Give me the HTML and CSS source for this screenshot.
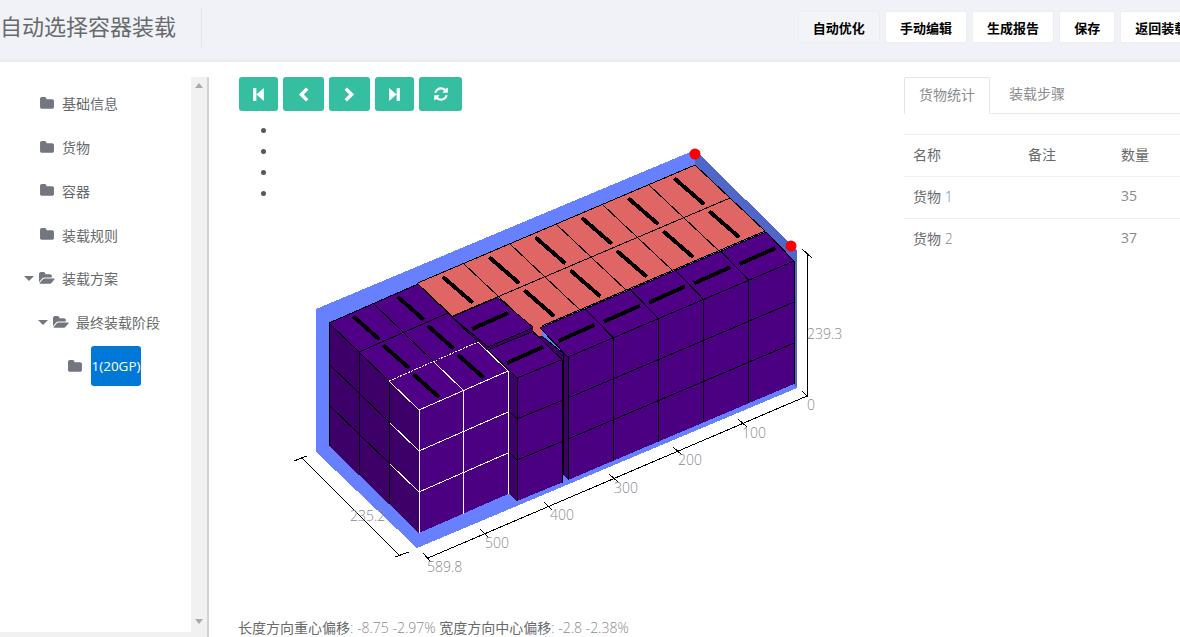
FILE: index.html
```html
<!DOCTYPE html>
<html lang="zh">

<head>
    <meta charset="utf-8">
    <title>自动选择容器装载</title>
    <link rel="stylesheet" href="styles.css">
</head>

<body>

    <header class="top-bar">
        <h1 class="page-title">自动选择容器装载</h1>
        <div class="top-actions">
            <button class="top-btn top-btn-active">自动优化</button>
            <button class="top-btn">手动编辑</button>
            <button class="top-btn">生成报告</button>
            <button class="top-btn">保存</button>
            <button class="top-btn">返回装载</button>
        </div>
    </header>

    <div class="main">
        <aside class="sidebar">
            <div class="tree-wrap">
                <div class="tree-row">
                    <svg class="folder" viewBox="0 0 1792 1792"><use href="#icon-folder"></use></svg>
                    <span>基础信息</span>
                </div>
                <div class="tree-row">
                    <svg class="folder" viewBox="0 0 1792 1792"><use href="#icon-folder"></use></svg>
                    <span>货物</span>
                </div>
                <div class="tree-row">
                    <svg class="folder" viewBox="0 0 1792 1792"><use href="#icon-folder"></use></svg>
                    <span>容器</span>
                </div>
                <div class="tree-row">
                    <svg class="folder" viewBox="0 0 1792 1792"><use href="#icon-folder"></use></svg>
                    <span>装载规则</span>
                </div>
                <div class="tree-row tree-open">
                    <i class="caret"></i>
                    <svg class="folder" viewBox="0 0 1920 1792"><use href="#icon-folder-open"></use></svg>
                    <span>装载方案</span>
                </div>
                <div class="tree-row tree-open depth-1">
                    <i class="caret"></i>
                    <svg class="folder" viewBox="0 0 1920 1792"><use href="#icon-folder-open"></use></svg>
                    <span>最终装载阶段</span>
                </div>
                <div class="tree-row depth-2">
                    <svg class="folder" viewBox="0 0 1792 1792"><use href="#icon-folder"></use></svg>
                    <span class="tree-selected">1(20GP)</span>
                </div>
            </div>
            <div class="scroll-y">
                <i class="arrow-up"></i>
                <i class="arrow-down"></i>
            </div>
            <div class="scroll-x"></div>
        </aside>

        <section class="stage">
            <div class="step-buttons">
                <button class="step-btn step-first">
                    <svg viewBox="0 0 12 14"><path d="M1 1h3v12H1zM4 7l7-6v12z"></path></svg>
                </button>
                <button class="step-btn step-wide">
                    <svg viewBox="0 0 12 14"><path class="chev" d="M9.500 1.500 4 7l5.500 5.500"></path></svg>
                </button>
                <button class="step-btn step-wide">
                    <svg viewBox="0 0 12 14"><path class="chev" d="M2.500 1.500 8 7l-5.500 5.500"></path></svg>
                </button>
                <button class="step-btn step-first">
                    <svg viewBox="0 0 12 14"><path d="M11 1H8v12h3zM8 7 1 1v12z"></path></svg>
                </button>
                <button class="step-btn step-last">
                    <svg viewBox="0 0 1792 1792"><path d="M1639 1056q0 5-1 7-64 268-268 434.5t-478 166.5q-146 0-282.5-55t-243.5-157l-129 129q-19 19-45 19t-45-19-19-45v-448q0-26 19-45t45-19h448q26 0 45 19t19 45-19 45l-137 137q71 66 161 102t187 36q134 0 250-65t186-179q11-17 53-117 8-23 30-23h192q13 0 22.500 9.500t9.500 22.500zm25-800v448q0 26-19 45t-45 19h-448q-26 0-45-19t-19-45 19-45l138-138q-148-137-349-137-134 0-250 65t-186 179q-11 17-53 117-8 23-30 23h-199q-13 0-22.500-9.500t-9.500-22.500v-7q65-268 270-434.500t480-166.500q146 0 284 55.500t245 156.500l130-129q19-19 45-19t45 19 19 45z"></path></svg>
                </button>
            </div>

            <ul class="step-list">
                <li></li>
                <li></li>
                <li></li>
                <li></li>
            </ul>

            <!-- 3D view, viewBox is in page pixels -->
            <svg class="scene" id="scene" viewBox="280 140 640 450">
                <g id="sceneShapes"></g>
                <g class="axis">
                    <line x1="807" y1="254" x2="807" y2="396"></line>
                    <line x1="802" y1="249" x2="812" y2="258"></line>
                    <line x1="802" y1="391" x2="808" y2="397"></line>
                    <line x1="807" y1="396" x2="428" y2="558"></line>
                    <line x1="738" y1="419" x2="747" y2="427"></line>
                    <line x1="673" y1="447" x2="682" y2="455"></line>
                    <line x1="609" y1="474" x2="618" y2="482"></line>
                    <line x1="544" y1="502" x2="552" y2="510"></line>
                    <line x1="480" y1="529" x2="488" y2="537"></line>
                    <line x1="423" y1="553" x2="431" y2="562"></line>
                    <line x1="301" y1="457" x2="400" y2="556"></line>
                    <line x1="294" y1="461" x2="307" y2="456"></line>
                    <line x1="395" y1="557" x2="409" y2="552"></line>
                </g>
                <g class="axis-label">
                    <text x="807" y="339">239.3</text>
                    <text x="807" y="410">0</text>
                    <text x="742" y="438">100</text>
                    <text x="678" y="465">200</text>
                    <text x="614" y="493">300</text>
                    <text x="550" y="520">400</text>
                    <text x="485" y="548">500</text>
                    <text x="427" y="572">589.8</text>
                    <text x="350" y="521">235.2</text>
                </g>
            </svg>

            <p class="offset-info">长度方向重心偏移<span class="num">: -8.75 -2.97%</span> 宽度方向中心偏移<span class="num">: -2.8 -2.38%</span></p>
        </section>

        <section class="side-panel">
            <div class="tabs">
                <div class="tab tab-active">货物统计</div>
                <div class="tab">装载步骤</div>
            </div>
            <table class="cargo-table">
                <thead>
                    <tr>
                        <th class="col-name">名称</th>
                        <th class="col-note">备注</th>
                        <th>数量</th>
                    </tr>
                </thead>
                <tbody>
                    <tr>
                        <td>货物 <span class="num num-blue">1</span></td>
                        <td></td>
                        <td class="num">35</td>
                    </tr>
                    <tr>
                        <td>货物 <span class="num">2</span></td>
                        <td></td>
                        <td class="num">37</td>
                    </tr>
                </tbody>
            </table>
        </section>
    </div>

    <svg class="icon-defs">
        <defs>
            <path id="icon-folder" d="M1728 608v704q0 92-66 158t-158 66h-1216q-92 0-158-66t-66-158v-960q0-92 66-158t158-66h320q92 0 158 66t66 158v32h672q92 0 158 66t66 158z"></path>
            <path id="icon-folder-open" d="M1879 952q0 31-31 66l-336 396q-43 51-120.500 86.500t-143.500 35.500h-1088q-34 0-60.500-13t-26.500-43q0-31 31-66l336-396q43-51 120.500-86.500t143.500-35.500h1088q34 0 60.500 13t26.500 43zm-343-344v160h-832q-94 0-197 47.500t-164 119.500l-337 396-5 6q0-4-.5-12.500t-.5-12.500v-960q0-92 66-158t158-66h320q92 0 158 66t66 158v32h544q92 0 158 66t66 158z"></path>
        </defs>
    </svg>

    <script src="script.js"></script>

</body>

</html>
```

FILE: styles.css
```css
* {
    box-sizing: border-box;
}

html,
body {
    margin: 0;
    height: 637px;
    overflow: hidden;
}

body {
    display: flex;
    flex-direction: column;
    font-family: "Open Sans", "Noto Sans CJK SC", sans-serif;
    font-size: 14px;
    color: #676a6c;
    background-color: #fff;
}

.top-bar {
    flex: 0 0 62px;
    display: flex;
    align-items: flex-start;
    background-color: #f1f2f7;
    border-bottom: 1px solid #e9e9ee;
    box-shadow: inset 0 -3px 3px -2px #e6e7ec;
}

.page-title {
    flex: 0 0 202px;
    height: 40px;
    margin: 7px 0 0 0;
    border-right: 1px solid #e3e4e9;
    font-size: 22px;
    font-weight: 400;
    line-height: 38px;
    white-space: nowrap;
}

.top-actions {
    flex: 0 0 auto;
    display: flex;
    gap: 5.500px;
    margin: 11px 0 0 596px;
}

.top-btn {
    height: 32px;
    padding: 0 13.800px;
    border: 1px solid #eceef3;
    border-radius: 2px;
    background-color: #fff;
    color: #000;
    font-family: inherit;
    font-size: 13px;
    font-weight: 700;
    white-space: nowrap;
}

.top-btn-active {
    background-color: #f3f4f8;
}

.main {
    flex: 1;
    display: flex;
    min-height: 0;
}

.sidebar {
    position: relative;
    flex: 0 0 209px;
    padding-top: 15px;
}

.tree-wrap {
    width: 191px;
    padding-top: 4.400px;
}

.tree-row {
    display: flex;
    align-items: center;
    height: 43.800px;
    padding-left: 39px;
    white-space: nowrap;
}

.tree-row span {
    margin-left: 7px;
}

.tree-open {
    padding-left: 24px;
}

.tree-open .folder {
    margin-left: -1px;
    margin-right: 0;
}

.depth-1 {
    padding-left: 38px;
}

.depth-2 {
    padding-left: 67px;
}

.folder {
    flex: 0 0 16px;
    width: 16px;
    height: 15px;
    fill: #73767f;
}

.caret {
    flex: 0 0 16px;
    width: 0;
    height: 0;
    position: relative;
}

.caret::before {
    content: "";
    position: absolute;
    left: 0;
    top: -2px;
    border-left: 5px solid transparent;
    border-right: 5px solid transparent;
    border-top: 5px solid #73767f;
}

.tree-row .tree-selected {
    width: 50px;
    height: 40px;
    margin-left: 8px;
    overflow: hidden;
    border-radius: 3px;
    background-color: #0078d7;
    color: #fff;
    line-height: 40px;
    text-align: center;
    font-size: 13.500px;
    white-space: nowrap;
}

.scroll-y {
    position: absolute;
    top: 15px;
    bottom: 0;
    left: 191px;
    width: 18px;
    background-color: #f1f1f1;
    border-right: 2px solid #d2d2d2;
}

.arrow-up,
.arrow-down {
    position: absolute;
    left: 4px;
    border-left: 4px solid transparent;
    border-right: 4px solid transparent;
}

.arrow-up {
    top: 6px;
    border-bottom: 5px solid #a9a9a9;
}

.arrow-down {
    bottom: 13px;
    border-top: 5px solid #a9a9a9;
}

.scroll-x {
    position: absolute;
    left: 0;
    bottom: 0;
    width: 191px;
    height: 5px;
    background-color: #f1f1f1;
}

.stage {
    position: relative;
    flex: 0 0 695px;
    display: flex;
    flex-direction: column;
    padding: 15px 0 0 30px;
}

.step-buttons {
    display: flex;
    gap: 5px;
}

.step-btn {
    display: flex;
    align-items: center;
    justify-content: center;
    height: 34px;
    padding: 0;
    border: 0;
    border-radius: 3px;
    background-color: #36bea1;
}

.step-btn svg {
    width: 13px;
    height: 15px;
    fill: #fff;
}

.step-first {
    width: 39px;
}

.step-wide {
    width: 41px;
}

.step-last {
    width: 43px;
}

.step-last svg {
    width: 16px;
    height: 16px;
}

.chev {
    fill: none;
    stroke: #fff;
    stroke-width: 3.200;
}

.step-list {
    margin: 8px 0 0 0;
    padding: 2px 0 0 39px;
    list-style: disc;
    color: #55565e;
}

.step-list li {
    height: 21px;
}

.scene {
    position: absolute;
    left: 71px;
    top: 78px;
    width: 640px;
    height: 450px;
}

.scene polygon {
    shape-rendering: crispEdges;
}

.scene line {
    stroke-width: 1;
    shape-rendering: crispEdges;
}

.axis line {
    stroke: #000;
}

.axis-label text {
    fill: #8a8a8e;
    font-size: 14px;
    font-weight: 300;
}

.offset-info {
    margin: auto 0 0 -1px;
    line-height: 19px;
    white-space: nowrap;
}

.num {
    color: #8a8a8e;
    font-weight: 300;
}

.num-blue {
    color: #5f8fc0;
}

.side-panel {
    flex: 1;
    min-width: 0;
    padding-top: 15px;
}

.tabs {
    display: flex;
    height: 37px;
    border-bottom: 1px solid #e7eaec;
}

.tab {
    height: 37px;
    padding: 0 19px;
    color: #8a8d90;
    line-height: 33px;
}

.tab-active {
    width: 86px;
    padding: 0 14px;
    border: 1px solid #e2e4e6;
    border-bottom-color: #fff;
    border-radius: 2px 2px 0 0;
    background-color: #fff;
}

.cargo-table {
    width: 100%;
    margin-top: 20px;
    border-collapse: collapse;
    table-layout: fixed;
}

.cargo-table th,
.cargo-table td {
    height: 42px;
    padding: 0 9px 4px;
    border-top: 1px solid #eff0f2;
    font-weight: 400;
    text-align: left;
}

.col-name {
    width: 115px;
}

.col-note {
    width: 93px;
}

.icon-defs {
    position: absolute;
    width: 0;
    height: 0;
}
```

FILE: script.js
```js
// builds the container view, all coordinates are page pixels
var NS = "http://www.w3.org/2000/svg";
var shapes = document.getElementById("sceneShapes");

var BLUE = "#6680ff";
var BLUE_DARK = "#5067c9";
var SALMON = "#e06666";
var TOP = "#4f0087";
var FRONT = "#4b0082";
var SIDE = "#3c0068";

function add(tag, attrs) {
    var el = document.createElementNS(NS, tag);
    for (var k in attrs) {
        el.setAttribute(k, attrs[k]);
    }
    shapes.appendChild(el);
    return el;
}

function poly(points, fill) {
    add("polygon", {
        points: points.map(function (p) { return p[0] + "," + p[1]; }).join(" "),
        fill: fill
    });
}

function line(a, b, color, width) {
    add("line", {
        x1: a[0], y1: a[1], x2: b[0], y2: b[1],
        stroke: color || "#000",
        style: width ? "stroke-width:" + width : ""
    });
}

function at(o, u, i, v, j) {
    return [o[0] + u[0] * i + v[0] * j, o[1] + u[1] * i + v[1] * j];
}

// filled grid of cells from corner o. skipEnd leaves off the bottom edge of a wall
function grid(o, u, nu, v, nv, fill, color, skipEnd) {
    poly([at(o, u, 0, v, 0), at(o, u, nu, v, 0), at(o, u, nu, v, nv), at(o, u, 0, v, nv)], fill);
    for (var i = 0; i <= nu; i++) {
        line(at(o, u, i, v, 0), at(o, u, i, v, nv), color);
    }
    for (var j = 0; j <= nv; j++) {
        if (skipEnd && j === nv) continue;
        line(at(o, u, 0, v, j), at(o, u, nu, v, j), color);
    }
}

// black mark in the middle of a top face, along direction d
function stripe(c, d) {
    line([c[0] - d[0], c[1] - d[1]], [c[0] + d[0], c[1] + d[1]], "#000", 4);
}

var DOWN = [0, 41];

// floor and walls
poly([[316, 309], [695, 150], [797, 250], [797, 388], [417, 548], [316, 452]], BLUE);
poly([[695, 150], [797, 250], [797, 388], [794, 385], [794, 261], [695, 165]], BLUE_DARK);

// salmon layer at the back
var sa = [695, 165], sl = [-46.3, 19.7], sw = [35, 33];
grid(sa, sl, 6, sw, 1, SALMON);
grid(at(sa, sl, 0, sw, 1), sl, 5, sw, 1, SALMON);
for (var i = 0; i < 6; i++) {
    stripe(at(sa, sl, i + 0.5, sw, 0.5), [15, 13]);
    if (i < 5) stripe(at(sa, sl, i + 0.5, sw, 1.5), [15, 13]);
}

// long row on the right, front faces towards the viewer
var ro = [794, 261], rl = [-45.2, 19.2], rw = [-28, -29];
poly([[533, 328], [568, 357], [568, 480], [563, 475], [533, 450]], SIDE);
line([539, 334], [568, 357]);
line([563, 352], [563, 475]);
poly([[528, 326], [542, 320], [542, 336], [528, 337]], SALMON);
grid(ro, rl, 5, rw, 1, TOP);
grid(ro, rl, 5, DOWN, 3, FRONT, "#000", true);
for (var r = 0; r < 5; r++) {
    stripe(at(ro, rl, r + 0.5, rw, 0.5), [18, -8]);
}

// two loose boxes in the middle
var ml = [45, -18.5], mw = [29, 28];
poly([[452, 317], [488, 347], [488, 420], [452, 400]], SIDE);
poly([[488, 347], [533, 328], [533, 331], [488, 350]], SIDE);
grid([452, 317], [45.5, -19.5], 1, [36, 30], 1, TOP);
stripe([490, 321], [18, -8]);
grid([488, 350], ml, 1, mw, 1, TOP);
stripe([525, 355], [18, -8]);
grid([488, 350], mw, 1, DOWN, 3, SIDE, "#000", true);
grid([517, 378], ml, 1, DOWN, 3, FRONT, "#000", true);

// block on the left, the last row is the one picked out in white
var lo = [329, 323], ll = [44.5, -19.500], lw = [30, 29];
grid(lo, ll, 2, lw, 2, TOP);
grid(lo, lw, 2, DOWN, 3, SIDE, "#000", true);

var wo = at(lo, ll, 0, lw, 2);
var wf = at(lo, ll, 0, lw, 3);
poly([wo, at(wo, ll, 2, lw, 0), at(wo, ll, 2, lw, 1), wf], TOP);
grid(wo, lw, 1, DOWN, 3, SIDE, "#fff", true);
line(wo, at(wo, DOWN, 3, lw, 0));
grid(wf, ll, 2, DOWN, 3, FRONT, "#fff", true);
line(wo, wf, "#fff");
line(at(wo, ll, 1, lw, 0), at(wo, ll, 1, lw, 1), "#fff");
line(at(wo, ll, 2, lw, 0), at(wo, ll, 2, lw, 1), "#fff");
add("line", {
    x1: wo[0], y1: wo[1],
    x2: at(wo, ll, 2, lw, 0)[0], y2: at(wo, ll, 2, lw, 0)[1],
    stroke: "#fff",
    "stroke-dasharray": "2 1"
});

for (var a = 0; a < 2; a++) {
    for (var b = 0; b < 3; b++) {
        stripe(at(lo, ll, a + 0.5, lw, b + 0.5), [13, 11.500]);
    }
}

// corner markers
[[695, 154], [791, 246]].forEach(function (p) {
    add("circle", { cx: p[0], cy: p[1], r: 5.500, fill: "#f00" });
});
```
